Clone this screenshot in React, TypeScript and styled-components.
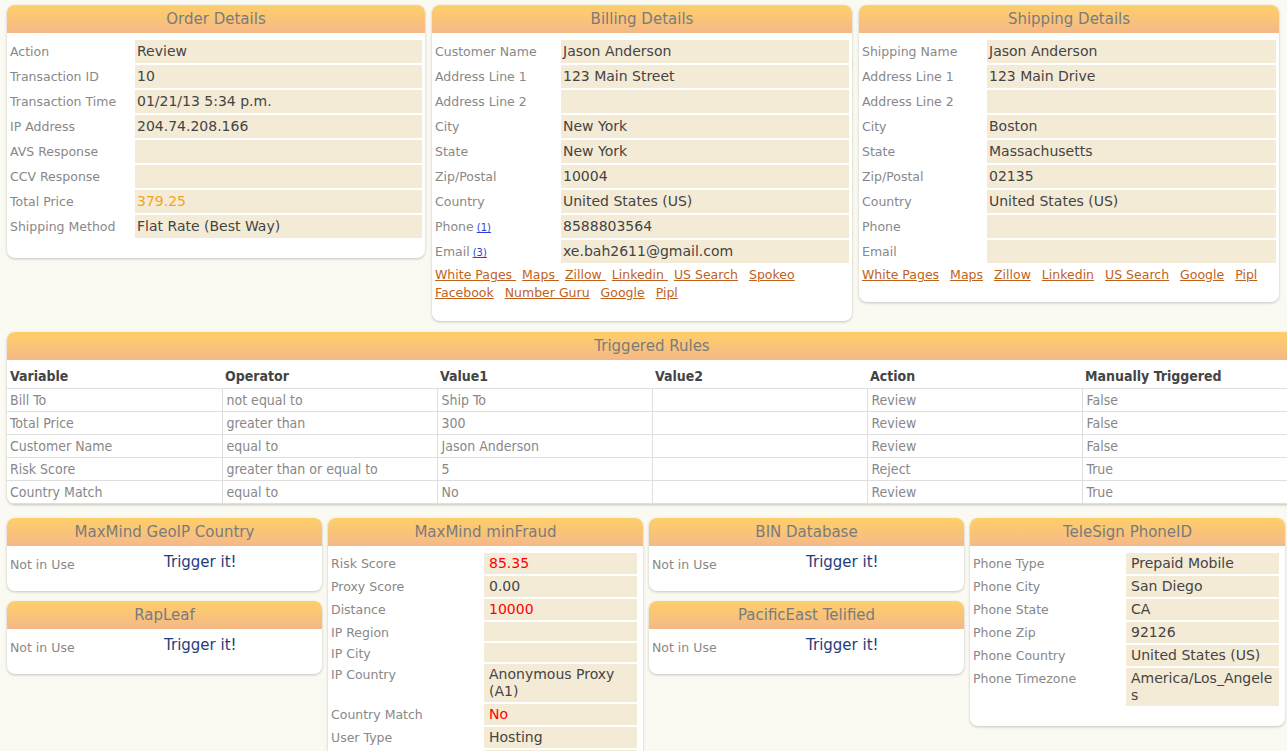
import React from "react";
import styled, { createGlobalStyle } from "styled-components";

const GlobalStyle = createGlobalStyle`
  html, body {
    margin: 0;
    padding: 0;
    overflow-x: hidden;
    background: #fafaf3;
    font-family: "DejaVu Sans", "Liberation Sans", sans-serif;
  }
`;

const Page = styled.div`
  display: flex;
  flex-direction: column;
  padding: 5px 7px 20px;
  width: 1273px;
`;

const TopRow = styled.div`
  display: grid;
  grid-template-columns: 418px 420px 420px;
  column-gap: 7px;
  align-items: start;
`;

const Panel = styled.section<{ $width?: string }>`
  background: #fff;
  border-radius: 8px;
  box-shadow: 0 1px 3px rgba(0, 0, 0, 0.22);
  overflow: hidden;
  ${({ $width }) => ($width ? `width: ${$width};` : "")}
`;

const PanelHeader = styled.h2`
  margin: 0;
  height: 28px;
  line-height: 28px;
  text-align: center;
  font-size: 15px;
  font-weight: normal;
  color: #7b7b7b;
  background: linear-gradient(#fecf69, #f5b888);
`;

const PanelBody = styled.div<{ $bottom?: number; $right?: number }>`
  padding: 7px ${({ $right }) => $right ?? 3}px
    ${({ $bottom }) => $bottom ?? 19}px 3px;
`;

const FieldGrid = styled.div<{ $labelCol: string }>`
  display: grid;
  grid-template-columns: ${({ $labelCol }) => $labelCol} 1fr;
  row-gap: 2px;
  align-items: start;
`;

const Label = styled.div<{ $pad: number }>`
  padding-top: ${({ $pad }) => $pad}px;
  line-height: 17px;
  font-size: 12.5px;
  color: #888;
`;

const Value = styled.div<{
  $pad: number;
  $inset: number;
  $minH: number;
  $tone?: "orange" | "red";
}>`
  padding: ${({ $pad }) => $pad}px 2px ${({ $pad }) => $pad}px
    ${({ $inset }) => $inset}px;
  line-height: 17px;
  min-height: ${({ $minH }) => $minH}px;
  font-size: 14px;
  background: #f4ebd6;
  overflow-wrap: anywhere;
  color: ${({ $tone }) =>
    $tone === "orange" ? "#f3a41f" : $tone === "red" ? "#ff0000" : "#444"};
`;

const CountLink = styled.a`
  font-size: 10px;
  color: #2b3fd6;
  text-decoration: underline;
  margin-left: 3px;
`;

const LinkRow = styled.div`
  display: flex;
  flex-wrap: wrap;
  column-gap: 11px;
  padding: 3px 0 0;
  line-height: 18px;
`;

const LookupLink = styled.a<{ $trail?: boolean }>`
  font-size: 12.5px;
  color: #c0621b;
  text-decoration: underline;
  white-space: pre;
  margin-right: ${({ $trail }) => ($trail ? "-5px" : "0")};
`;

const RulesSection = styled.div`
  margin-top: 11px;
`;

const RulesTable = styled.table`
  width: 100%;
  border-collapse: collapse;
  table-layout: fixed;
  font-family: "DejaVu Sans Condensed", Roboto, sans-serif;
  font-stretch: condensed;

  th {
    height: 24px;
    padding: 4px 3px 0;
    text-align: left;
    font-size: 14px;
    font-weight: bold;
    color: #444;
    border-bottom: 1px solid #dedede;
  }

  td {
    height: 22px;
    font-size: 14px;
    color: #888;
    padding: 0 4px;
    border-bottom: 1px solid #dedede;
    border-left: 1px solid #dedede;
  }

  td:first-child {
    border-left: none;
    padding-left: 3px;
  }
`;

const BottomRow = styled.div`
  margin-top: 14px;
  display: grid;
  grid-template-columns: repeat(4, 315px);
  column-gap: 6px;
  align-items: start;
`;

const Stack = styled.div`
  display: flex;
  flex-direction: column;
  gap: 10px;
`;

const Trigger = styled.a`
  display: block;
  padding-left: 1px;
  font-size: 15px;
  line-height: 19px;
  color: #1f3d7d;
  text-decoration: none;
  cursor: pointer;
`;

type Field = {
  label: string;
  value?: string;
  tone?: "orange" | "red";
  count?: string;
};

type Density = { pad: number; inset: number; minH: number };

const roomy: Density = { pad: 3, inset: 2, minH: 17 };
const compact: Density = { pad: 2, inset: 5, minH: 15 };

const Fields = ({
  rows,
  labelCol,
  density,
}: {
  rows: Field[];
  labelCol: string;
  density: Density;
}) => (
  <FieldGrid $labelCol={labelCol}>
    {rows.map((r, i) => (
      <React.Fragment key={i}>
        <Label $pad={density.pad}>
          {r.label}
          {r.count && <CountLink href="#">{r.count}</CountLink>}
        </Label>
        <Value
          $pad={density.pad}
          $inset={density.inset}
          $minH={density.minH}
          $tone={r.tone}
        >
          {r.value ?? ""}
        </Value>
      </React.Fragment>
    ))}
  </FieldGrid>
);

const Links = ({ items }: { items: string[] }) => (
  <LinkRow>
    {items.map((t) => (
      <LookupLink key={t} href="#" $trail={t.endsWith(" ")}>
        {t.endsWith(" ") ? t.trimEnd() + "\u00a0" : t}
      </LookupLink>
    ))}
  </LinkRow>
);

const orderRows: Field[] = [
  { label: "Action", value: "Review" },
  { label: "Transaction ID", value: "10" },
  { label: "Transaction Time", value: "01/21/13 5:34 p.m." },
  { label: "IP Address", value: "204.74.208.166" },
  { label: "AVS Response" },
  { label: "CCV Response" },
  { label: "Total Price", value: "379.25", tone: "orange" },
  { label: "Shipping Method", value: "Flat Rate (Best Way)" },
];

const billingRows: Field[] = [
  { label: "Customer Name", value: "Jason Anderson" },
  { label: "Address Line 1", value: "123 Main Street" },
  { label: "Address Line 2" },
  { label: "City", value: "New York" },
  { label: "State", value: "New York" },
  { label: "Zip/Postal", value: "10004" },
  { label: "Country", value: "United States (US)" },
  { label: "Phone", value: "8588803564", count: "(1)" },
  { label: "Email", value: "xe.bah2611@gmail.com", count: "(3)" },
];

const shippingRows: Field[] = [
  { label: "Shipping Name", value: "Jason Anderson" },
  { label: "Address Line 1", value: "123 Main Drive" },
  { label: "Address Line 2" },
  { label: "City", value: "Boston" },
  { label: "State", value: "Massachusetts" },
  { label: "Zip/Postal", value: "02135" },
  { label: "Country", value: "United States (US)" },
  { label: "Phone" },
  { label: "Email" },
];

const rules = [
  ["Bill To", "not equal to", "Ship To", "", "Review", "False"],
  ["Total Price", "greater than", "300", "", "Review", "False"],
  ["Customer Name", "equal to", "Jason Anderson", "", "Review", "False"],
  ["Risk Score", "greater than or equal to", "5", "", "Reject", "True"],
  ["Country Match", "equal to", "No", "", "Review", "True"],
];

const minFraudRows: Field[] = [
  { label: "Risk Score", value: "85.35", tone: "red" },
  { label: "Proxy Score", value: "0.00" },
  { label: "Distance", value: "10000", tone: "red" },
  { label: "IP Region" },
  { label: "IP City" },
  { label: "IP Country", value: "Anonymous Proxy (A1)" },
  { label: "Country Match", value: "No", tone: "red" },
  { label: "User Type", value: "Hosting" },
  { label: "" },
];

const teleSignRows: Field[] = [
  { label: "Phone Type", value: "Prepaid Mobile" },
  { label: "Phone City", value: "San Diego" },
  { label: "Phone State", value: "CA" },
  { label: "Phone Zip", value: "92126" },
  { label: "Phone Country", value: "United States (US)" },
  { label: "Phone Timezone", value: "America/Los_Angeles" },
];

const NotInUse = ({ title }: { title: string }) => (
  <Panel>
    <PanelHeader>{title}</PanelHeader>
    <PanelBody $bottom={18} $right={6}>
      <FieldGrid $labelCol="50%">
        <Label $pad={3}>Not in Use</Label>
        <Trigger href="#">Trigger it!</Trigger>
      </FieldGrid>
    </PanelBody>
  </Panel>
);

export default function App() {
  return (
    <>
      <GlobalStyle />
      <Page>
        <TopRow>
          <Panel>
            <PanelHeader>Order Details</PanelHeader>
            <PanelBody $bottom={20}>
              <Fields rows={orderRows} labelCol="125px" density={roomy} />
            </PanelBody>
          </Panel>
          <Panel>
            <PanelHeader>Billing Details</PanelHeader>
            <PanelBody>
              <Fields rows={billingRows} labelCol="126px" density={roomy} />
              <Links
                items={[
                  "White Pages ",
                  "Maps ",
                  "Zillow ",
                  "Linkedin ",
                  "US Search",
                  "Spokeo",
                  "Facebook",
                  "Number Guru",
                  "Google",
                  "Pipl",
                ]}
              />
            </PanelBody>
          </Panel>
          <Panel>
            <PanelHeader>Shipping Details</PanelHeader>
            <PanelBody $bottom={18}>
              <Fields rows={shippingRows} labelCol="125px" density={roomy} />
              <Links
                items={[
                  "White Pages",
                  "Maps",
                  "Zillow",
                  "Linkedin",
                  "US Search",
                  "Google",
                  "Pipl",
                ]}
              />
            </PanelBody>
          </Panel>
        </TopRow>

        <RulesSection>
          <Panel $width="1290px">
            <PanelHeader>Triggered Rules</PanelHeader>
            <RulesTable>
              <thead>
                <tr>
                  <th>Variable</th>
                  <th>Operator</th>
                  <th>Value1</th>
                  <th>Value2</th>
                  <th>Action</th>
                  <th>Manually Triggered</th>
                </tr>
              </thead>
              <tbody>
                {rules.map((r) => (
                  <tr key={r[0]}>
                    {r.map((c, i) => (
                      <td key={i}>{c}</td>
                    ))}
                  </tr>
                ))}
              </tbody>
            </RulesTable>
          </Panel>
        </RulesSection>

        <BottomRow>
          <Stack>
            <NotInUse title="MaxMind GeoIP Country" />
            <NotInUse title="RapLeaf" />
          </Stack>
          <Panel>
            <PanelHeader>MaxMind minFraud</PanelHeader>
            <PanelBody $bottom={20} $right={6}>
              <Fields rows={minFraudRows} labelCol="50%" density={compact} />
            </PanelBody>
          </Panel>
          <Stack>
            <NotInUse title="BIN Database" />
            <NotInUse title="PacificEast Telified" />
          </Stack>
          <Panel>
            <PanelHeader>TeleSign PhoneID</PanelHeader>
            <PanelBody $bottom={20} $right={6}>
              <Fields rows={teleSignRows} labelCol="50%" density={compact} />
            </PanelBody>
          </Panel>
        </BottomRow>
      </Page>
    </>
  );
}
